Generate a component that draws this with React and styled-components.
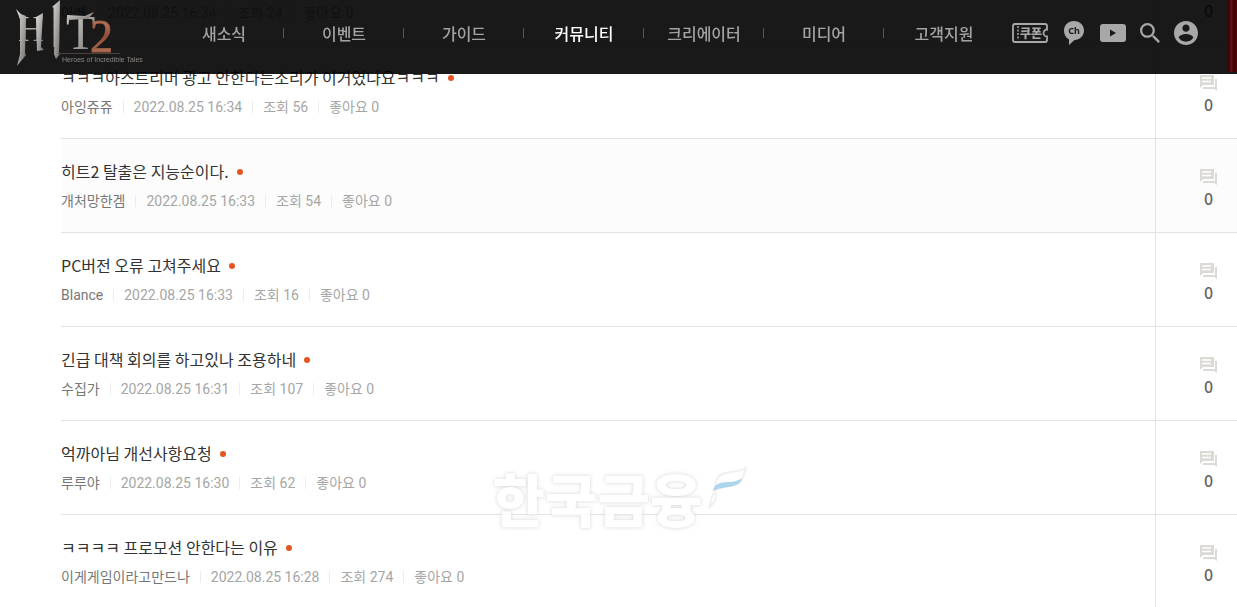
import React from "react";
import styled, { createGlobalStyle } from "styled-components";

const GlobalStyle = createGlobalStyle`
  * {
    box-sizing: border-box;
  }

  body {
    margin: 0;
    background: #fff;
    font-family: "Noto Sans CJK KR", sans-serif;
    overflow: hidden;
  }

  a {
    color: inherit;
    text-decoration: none;
  }

  ul {
    margin: 0;
    padding: 0;
    list-style: none;
  }
`;

const Page = styled.div`
  position: relative;
  height: 100vh;
  overflow: hidden;
`;

/* === header === */
const Header = styled.header`
  position: fixed;
  top: 0;
  left: 0;
  right: 0;
  z-index: 10;
  display: flex;
  align-items: center;
  height: 74px;
  background: rgba(0, 0, 0, 0.9);
`;

const LogoLink = styled.a`
  flex: none;
  width: 164px;
  height: 74px;

  svg {
    display: block;
  }
`;

const NavList = styled.ul`
  display: flex;
  padding-bottom: 8px;
`;

const NavItem = styled.li`
  display: flex;
  align-items: center;
  width: 120px;

  &:not(:first-child)::before {
    content: "";
    width: 1px;
    height: 10px;
    margin-left: -1px;
    background: #555;
  }
`;

const NavLink = styled.a`
  flex: 1;
  text-align: center;
  font-size: 16px;
  line-height: 24px;
  font-weight: 500;
  color: ${(props) => (props.$active ? "#fff" : "#a3a3a3")};
`;

const Tools = styled.div`
  display: flex;
  align-items: center;
  gap: 14px;
  padding: 0 0 8px 8px;
`;

const ToolButton = styled.button`
  display: flex;
  padding: 0;
  border: none;
  background: transparent;
  color: #a8a8a8;
  cursor: pointer;
`;

const SideArt = styled.div`
  align-self: stretch;
  width: 9px;
  margin: 0 0 2px auto;
  background: linear-gradient(90deg, #2b0205, #5e0a0d 30%, #6b1013 40%, #400204 60%, #4a0508);
`;

/* === board === */
const Board = styled.ul`
  margin: -49px 0 0 61px;
`;

const Row = styled.li`
  display: flex;
  height: 94px;
  border-bottom: 1px solid #e3e3e3;
  background: ${(props) => (props.$hover ? "#fcfcfc" : "#fff")};
`;

const Post = styled.div`
  flex: 1;
  min-width: 0;
  padding-top: 20px;
`;

const Title = styled.a`
  display: flex;
  align-items: center;
  gap: 8px;
  font-size: 16px;
  line-height: 24px;
  color: #333;

  &::after {
    content: "";
    width: 6px;
    height: 6px;
    margin-top: 2px;
    border-radius: 50%;
    background: #e2561f;
  }
`;

const Meta = styled.div`
  display: flex;
  align-items: center;
  margin-top: 8px;
  font-family: Roboto, "Noto Sans CJK KR", sans-serif;
  font-size: 14px;
  line-height: 20px;
  color: #a6a6a6;
`;

const MetaItem = styled.span`
  display: flex;
  align-items: center;
  color: ${(props) => (props.$author ? "#777" : "inherit")};

  &:not(:first-child)::before {
    content: "";
    width: 1px;
    height: 12px;
    margin: 0 10px;
    background: #ebebeb;
  }
`;

const Replies = styled.a`
  display: flex;
  flex-direction: column;
  align-items: center;
  gap: 1px;
  width: 82px;
  padding: 30px 0 0 24px;
  border-left: 1px solid #e3e3e3;
  font-size: 16px;
  line-height: 24px;
  font-weight: 500;
  color: #666;
`;

/* === press mark over the list === */
const Mark = styled.div`
  position: absolute;
  left: 50%;
  bottom: 76px;
  display: flex;
  align-items: flex-start;
  gap: 6px;
  padding-left: 6px;
  transform: translateX(-50%);
  opacity: 0.8;
  pointer-events: none;
`;

const MarkText = styled.span`
  font-size: 57px;
  line-height: 68px;
  font-weight: 900;
  color: #fff;
  text-shadow: 0 0 4px #d4d4d4, 0 0 2px #e6e6e6;
`;

const menus = ["새소식", "이벤트", "가이드", "커뮤니티", "크리에이터", "미디어", "고객지원"];

const posts = [
  { title: "ㅋㅋㅋㅋ", author: "아빠", date: "2022.08.25 16:34", views: 24 },
  { title: "ㅋㅋㅋ아스트리머 광고 안한다는소리가 이거였나요ㅋㅋㅋ", author: "아잉쥬쥬", date: "2022.08.25 16:34", views: 56 },
  { title: "히트2 탈출은 지능순이다.", author: "개처망한겜", date: "2022.08.25 16:33", views: 54, hover: true },
  { title: "PC버전 오류 고쳐주세요", author: "Blance", date: "2022.08.25 16:33", views: 16 },
  { title: "긴급 대책 회의를 하고있나 조용하네", author: "수집가", date: "2022.08.25 16:31", views: 107 },
  { title: "억까아님 개선사항요청", author: "루루야", date: "2022.08.25 16:30", views: 62 },
  { title: "ㅋㅋㅋㅋ 프로모션 안한다는 이유", author: "이게게임이라고만드나", date: "2022.08.25 16:28", views: 274 },
];

function Logo() {
  return (
    <svg width="164" height="74" viewBox="0 0 164 74" role="img" aria-label="HIT2">
      <defs>
        <linearGradient id="steel" x1="0" y1="0" x2="1" y2="1">
          <stop offset="0" stopColor="#dedcd9" />
          <stop offset="0.5" stopColor="#a9a6a3" />
          <stop offset="1" stopColor="#6d6a68" />
        </linearGradient>
        <linearGradient id="copper" x1="0" y1="0" x2="0" y2="1">
          <stop offset="0" stopColor="#d99a7c" />
          <stop offset="0.5" stopColor="#8d4b35" />
          <stop offset="1" stopColor="#c0846a" />
        </linearGradient>
      </defs>
      <g fill="url(#steel)" fontFamily="Liberation Serif, serif">
        <text x="18" y="41" fontSize="36">H</text>
        <text x="48" y="47" fontSize="60" fontFamily="Liberation Sans, sans-serif">I</text>
        <text x="66" y="49" fontSize="48">T</text>
        <path d="M16 9l5 5 5 2-1 37 1 2-9 11 3-12V19z" />
        <path d="M36 17l7-4-2 34 3 3-7 1z" />
        <path d="M60 0l-1 52 1 2-4 5-2-5 1-46-3-1z" />
        <path d="M67 15l18 1 9-4-6 7-21 1z" />
      </g>
      <text x="90" y="52" fontSize="46" fontFamily="Liberation Serif, serif" fill="url(#copper)" stroke="#9c5a42" strokeWidth="1">2</text>
      <path d="M58 53.500h62" stroke="#4b403b" />
      <text x="62" y="62" fontSize="7" fontFamily="Liberation Sans, sans-serif" fill="#8a8683">Heroes of Incredible Tales</text>
    </svg>
  );
}

function CouponIcon() {
  return (
    <svg width="36" height="20" viewBox="0 0 36 20">
      <path d="M3 1h30q2 0 2 2v3.500a3.500 3.500 0 0 0 0 7V17q0 2-2 2H3q-2 0-2-2V3q0-2 2-2z" fill="none" stroke="currentColor" strokeWidth="1.800" />
      <path d="M6 3v14" stroke="currentColor" strokeWidth="1.500" strokeDasharray="2 1.500" />
      <text x="8" y="15" fontSize="12" fontWeight="900" fontFamily="Noto Sans CJK KR, sans-serif" fill="currentColor">쿠폰</text>
    </svg>
  );
}

function ChannelIcon() {
  return (
    <svg width="24" height="26" viewBox="0 0 24 26">
      <path d="M12 1c5.600 0 10 4 10 9.500S17.500 20 12.500 20L7 25v-5.500C4 18 2 14.500 2 10.500 2 5 6.400 1 12 1z" fill="currentColor" />
      <text x="12" y="14" textAnchor="middle" fontSize="9" fontWeight="700" fontFamily="Noto Sans, sans-serif" fill="#1a1a1a">Ch</text>
    </svg>
  );
}

function VideoIcon() {
  return (
    <svg width="26" height="18" viewBox="0 0 26 18">
      <rect width="26" height="18" rx="3" fill="currentColor" />
      <path d="M10 5.500v7l6-3.500z" fill="#1a1a1a" />
    </svg>
  );
}

function SearchIcon() {
  return (
    <svg width="20" height="20" viewBox="3 3 17.500 17.500">
      <path fill="currentColor" d="M15.500 14h-.79l-.28-.27A6.471 6.471 0 0 0 16 9.500 6.500 6.500 0 1 0 9.500 16c1.610 0 3.090-.59 4.230-1.570l.27.28v.79l5 4.990L20.490 19zm-6 0C7.010 14 5 11.990 5 9.500S7.010 5 9.500 5 14 7.010 14 9.500 11.990 14 9.500 14z" />
    </svg>
  );
}

function UserIcon() {
  return (
    <svg width="24" height="24" viewBox="2 2 20 20">
      <path fill="currentColor" d="M12 2C6.480 2 2 6.480 2 12s4.480 10 10 10 10-4.480 10-10S17.520 2 12 2zm0 3c1.660 0 3 1.340 3 3s-1.340 3-3 3-3-1.340-3-3 1.340-3 3-3zm0 14.200a7.200 7.200 0 0 1-6-3.220c.03-1.990 4-3.080 6-3.080 1.990 0 5.970 1.090 6 3.080a7.200 7.200 0 0 1-6 3.220z" />
    </svg>
  );
}

function ReplyIcon() {
  return (
    <svg width="17" height="16" viewBox="0 0 17 16">
      <path d="M0 0h14v10H3l-3 3z" fill="#dcdad5" />
      <path d="M2 3h9M2 6.500h9" stroke="#fff" strokeWidth="1.500" />
      <path d="M15 4h2v12l-3-2H3v-2h12z" fill="#dcdad5" />
    </svg>
  );
}

function Feather() {
  return (
    <svg width="42" height="50" viewBox="0 0 42 50">
      <path d="M38 4C32 12 12 5 8 18L6 29C14 19 30 28 35 14L38 4z" fill="#fff" stroke="#ededed" strokeWidth="2" />
      <path d="M5 28C8 14 24 23 34 15C31 27 15 22 5 28z" fill="#97cde8" />
      <path d="M5 30L1 45l6-7 1-9" fill="#fff" stroke="#ededed" strokeWidth="2" />
    </svg>
  );
}

export default function App() {
  return (
    <Page>
      <GlobalStyle />
      <Header>
        <LogoLink href="#home">
          <Logo />
        </LogoLink>
        <nav>
          <NavList>
            {menus.map((menu) => (
              <NavItem key={menu}>
                <NavLink href="#menu" $active={menu === "커뮤니티"}>
                  {menu}
                </NavLink>
              </NavItem>
            ))}
          </NavList>
        </nav>
        <Tools>
          <ToolButton aria-label="쿠폰">
            <CouponIcon />
          </ToolButton>
          <ToolButton aria-label="채널">
            <ChannelIcon />
          </ToolButton>
          <ToolButton aria-label="유튜브">
            <VideoIcon />
          </ToolButton>
          <ToolButton aria-label="검색">
            <SearchIcon />
          </ToolButton>
          <ToolButton aria-label="내 정보">
            <UserIcon />
          </ToolButton>
        </Tools>
        <SideArt />
      </Header>
      <Board>
        {posts.map((post) => (
          <Row key={post.author} $hover={post.hover}>
            <Post>
              <Title href="#post">{post.title}</Title>
              <Meta>
                <MetaItem $author>{post.author}</MetaItem>
                <MetaItem>{post.date}</MetaItem>
                <MetaItem>조회 {post.views}</MetaItem>
                <MetaItem>좋아요 0</MetaItem>
              </Meta>
            </Post>
            <Replies href="#replies">
              <ReplyIcon />0
            </Replies>
          </Row>
        ))}
      </Board>
      <Mark>
        <MarkText>한국금융</MarkText>
        <Feather />
      </Mark>
    </Page>
  );
}
